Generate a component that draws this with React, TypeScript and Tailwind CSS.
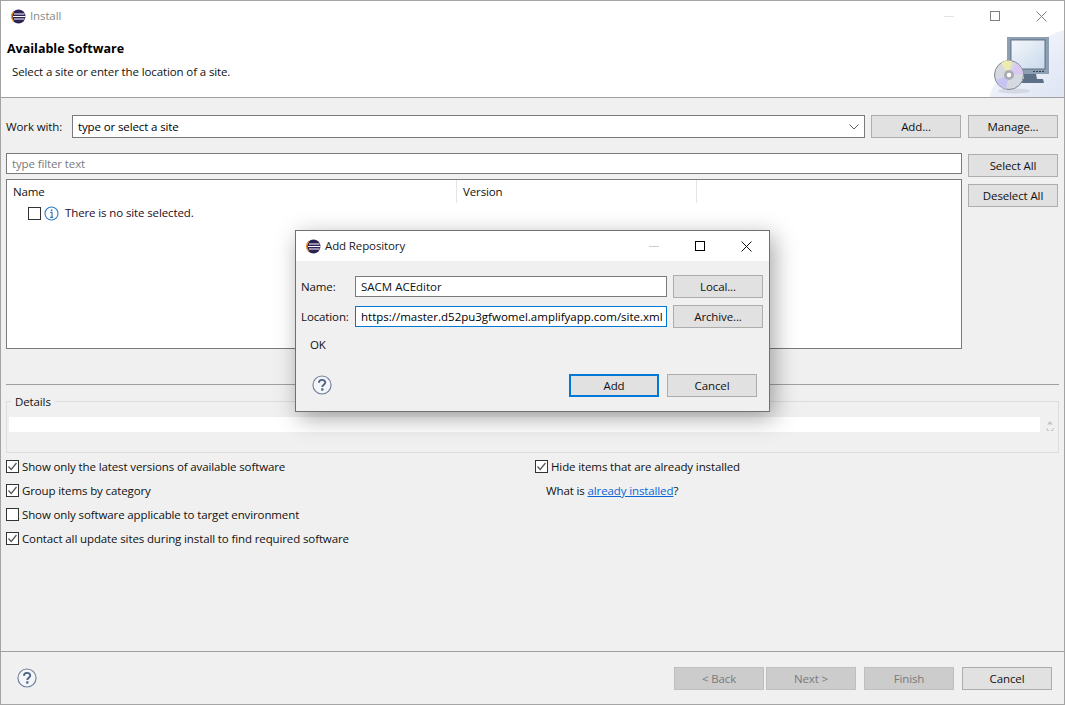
import React from "react";

function EclipseIcon() {
  return (
    <svg width="15" height="15" viewBox="0 0 15 15" className="shrink-0">
      <circle cx="7.5" cy="7.500" r="7" fill="#2c2255" />
      <path d="M2.500 2.800A7 7 0 0 0 .7 7.500a7 7 0 0 0 1.800 4.700" fill="none" stroke="#f7941e" strokeWidth="1.300" />
      <path d="M3 5h10.500M2 7.500h12.500M3 10h10.500" stroke="#ffffff" strokeWidth="1" />
    </svg>
  );
}

function HelpIcon() {
  return (
    <svg width="20" height="20" viewBox="0 0 21 21" className="shrink-0">
      <circle cx="10.500" cy="10.500" r="9.500" fill="#f4f5f8" stroke="#6f7f9e" strokeWidth="1.200" />
      <path d="M7.300 8.200c0-4 6.600-4 6.600-.3 0 2.400-3.100 2.300-3.100 4.600" fill="none" stroke="#4d6186" strokeWidth="2" />
      <rect x="9.600" y="14" width="2.400" height="2.400" fill="#4d6186" />
    </svg>
  );
}

function Check({ checked }: { checked?: boolean }) {
  return (
    <span className="w-[13px] h-[13px] border border-[#333333] bg-white flex shrink-0 items-center justify-center">
      {checked && (
        <svg width="11" height="11" viewBox="0 0 11 11">
          <path d="M1.500 5.500 4.200 8.500 9.500 2" fill="none" stroke="#555555" strokeWidth="1.200" />
        </svg>
      )}
    </span>
  );
}

function CheckRow({ label, checked }: { label: string; checked?: boolean }) {
  return (
    <div className="h-[24px] flex items-center gap-[3px]">
      <Check checked={checked} />
      <span className="pt-px">{label}</span>
    </div>
  );
}

function Btn({ label, className = "", focused }: { label: string; className?: string; focused?: boolean }) {
  const border = focused ? "border-2 border-[#0078d7]" : "border border-[#adadad]";
  return (
    <div className={"w-[90px] h-[23px] pt-px shrink-0 flex items-center justify-center bg-[#e1e1e1] text-[#111111] " + border + " " + className}>
      {label}
    </div>
  );
}

function DisabledBtn({ label }: { label: string }) {
  return (
    <div className="w-[90px] h-[23px] pt-px shrink-0 flex items-center justify-center border border-[#bfbfbf] bg-[#cccccc] text-[#7a7a7a]">
      {label}
    </div>
  );
}

function MonitorArt() {
  return (
    <svg width="78" height="68" viewBox="0 0 78 68" className="shrink-0">
      <defs>
        <linearGradient id="bgw" x1="0" y1="0" x2="1" y2="1">
          <stop offset="0" stopColor="#ffffff" />
          <stop offset="0.7" stopColor="#e6ebf7" />
          <stop offset="1" stopColor="#dfe5f4" />
        </linearGradient>
        <linearGradient id="scr" x1="0" y1="0" x2="1" y2="1">
          <stop offset="0" stopColor="#f4f7fb" />
          <stop offset="1" stopColor="#c9d9ec" />
        </linearGradient>
      </defs>
      <path d="M3 68C12 40 44 12 78 1V68Z" fill="url(#bgw)" />
      <rect x="21" y="8" width="42" height="37" fill="#8c9fb3" />
      <rect x="25" y="11" width="34" height="29" fill="url(#scr)" stroke="#4d5c6e" strokeWidth="0.800" />
      <path d="M47 42h2v1h-2zM50 42h2v1h-2zM53 42h2v1h-2zM56 42h2v1h-2z" fill="#33404e" />
      <path d="M38 45h12l1 5h6l1 4H32l1-4h5Z" fill="#5d7085" />
      <ellipse cx="28" cy="62" rx="16" ry="2.500" fill="#c6cbd6" opacity="0.600" />
      <circle cx="23" cy="46" r="14.500" fill="#d6dae0" stroke="#7f8a94" />
      <path d="M23 46 15 34A14 14 0 0 1 26 32Z" fill="#ecebb0" />
      <path d="M23 46 30 34A14 14 0 0 1 37 45Z" fill="#d9c8f3" />
      <path d="M23 46 10 51A14 14 0 0 0 20 60Z" fill="#c8c4f0" />
      <circle cx="23" cy="46" r="5" fill="#a9aeb3" />
      <circle cx="23" cy="46" r="2.200" fill="#ffffff" />
    </svg>
  );
}

export default function App() {
  return (
    <div className="relative w-[1065px] h-[706px] bg-white text-[11.5px] tracking-[-0.12px] text-[#111111] overflow-hidden font-['Open_Sans','Noto_Sans',sans-serif]">
      <div className="h-[705px] border border-[#a3a3a3] flex flex-col">
        {/* Header */}
        <div className="h-[96px] bg-white relative flex flex-col shrink-0">
          <div className="h-[30px] flex items-center pl-[10px] gap-[4px]">
            <EclipseIcon />
            <span className="text-[#8a8a8a]">Install</span>
            <div className="ml-auto flex items-center h-full">
              <span className="w-[46px] flex justify-center"><span className="w-[10px] h-px bg-[#e2e2e2]" /></span>
              <span className="w-[46px] flex justify-center"><span className="w-[10px] h-[10px] border border-[#808080]" /></span>
              <span className="w-[46px] flex justify-center">
                <svg width="11" height="11" viewBox="0 0 11 11"><path d="M.5.5l10 10M10.500.5l-10 10" stroke="#808080" fill="none" /></svg>
              </span>
            </div>
          </div>
          <div className="pl-[6px] pt-[9px] font-bold leading-[18px] text-[12.5px] tracking-normal text-black">Available Software</div>
          <div className="pl-[11px] pt-[5px] leading-[18px]">Select a site or enter the location of a site.</div>
          <div className="absolute right-0 bottom-0 flex"><MonitorArt /></div>
        </div>

        {/* Body */}
        <div className="flex-1 bg-[#f0f0f0] border-t border-[#a0a0a0] flex flex-col px-[5px] pt-[17px]">
          <div className="flex items-center h-[23px]">
            <span className="w-[66px] pt-px">Work with:</span>
            <div className="w-[793px] h-[23px] border border-[#7a7a7a] bg-white flex items-center pl-[5px] pr-[5px]">
              <span className="text-black pt-px">type or select a site</span>
              <svg className="ml-auto" width="10" height="6" viewBox="0 0 10 6"><path d="M.5.5 5 5 9.500.5" fill="none" stroke="#606060" /></svg>
            </div>
            <Btn label="Add..." className="ml-[6px]" />
            <Btn label="Manage..." className="ml-[7px]" />
          </div>

          <div className="flex mt-[15px] gap-[6px]">
            <div className="w-[956px] flex flex-col gap-[5px]">
              <div className="h-[21px] border border-[#7a7a7a] bg-white flex items-center pl-[5px] text-[#7a7a7a]">type filter text</div>
              <div className="h-[170px] border border-[#7a7a7a] bg-white flex flex-col">
                <div className="h-[23px] flex shrink-0">
                  <div className="w-[450px] pl-[6px] flex items-center border-r border-[#e5e5e5]">Name</div>
                  <div className="w-[240px] pl-[6px] flex items-center border-r border-[#e5e5e5]">Version</div>
                </div>
                <div className="h-[20px] flex items-center pl-[21px]">
                  <Check />
                  <svg width="15" height="15" viewBox="0 0 15 15" className="ml-[3px] shrink-0">
                    <circle cx="7.500" cy="7.500" r="6.500" fill="#fff" stroke="#2f7cc0" strokeWidth="1.100" />
                    <path d="M6.200 6.300h1.800v5M6 11.300h3.200" fill="none" stroke="#2f7cc0" strokeWidth="1.200" />
                    <rect x="6.800" y="3.400" width="1.600" height="1.600" fill="#2f7cc0" />
                  </svg>
                  <span className="ml-[6px] text-[#2a0a24]">There is no site selected.</span>
                </div>
              </div>
            </div>
            <div className="flex flex-col gap-[7px] pt-px">
              <Btn label="Select All" />
              <Btn label="Deselect All" />
            </div>
          </div>

          <div className="mt-[35px] h-px w-[1053px] bg-[#a0a0a0]" />

          <div className="relative mt-[10px] w-[1053px] h-[58px] pt-[6px]">
            <div className="h-[52px] border border-[#dcdcdc] pt-[15px] px-[2px] flex">
              <div className="w-[1031px] h-[15px] bg-white" />
              <svg className="ml-[5px] mt-[3px]" width="10" height="12" viewBox="0 0 10 12">
                <path d="M5 1 8 4.500H2Z" fill="#c4c4c4" />
                <path d="M2 8v2.500h2M8 8v2.500H6" fill="none" stroke="#c4c4c4" />
              </svg>
            </div>
            <span className="absolute left-[5px] top-0 px-[4px] bg-[#f0f0f0] leading-[14px]">Details</span>
          </div>

          <div className="flex mt-px">
            <div className="w-[529px]">
              <CheckRow checked label="Show only the latest versions of available software" />
              <CheckRow checked label="Group items by category" />
              <CheckRow label="Show only software applicable to target environment" />
              <CheckRow checked label="Contact all update sites during install to find required software" />
            </div>
            <div>
              <CheckRow checked label="Hide items that are already installed" />
              <div className="h-[24px] flex items-center pl-[11px] pt-px">
                <span>What is&nbsp;<span className="text-[#0a66d8] underline">already installed</span>?</span>
              </div>
            </div>
          </div>
        </div>

        {/* Footer */}
        <div className="h-[53px] shrink-0 bg-[#f0f0f0] border-t border-[#a0a0a0] flex items-center pl-[16px] pr-[12px]">
          <HelpIcon />
          <div className="ml-auto flex">
            <DisabledBtn label="< Back" />
            <div className="w-[2px]" />
            <DisabledBtn label="Next >" />
            <div className="w-[8px]" />
            <DisabledBtn label="Finish" />
            <div className="w-[8px]" />
            <Btn label="Cancel" />
          </div>
        </div>
      </div>

      {/* Dialog */}
      <div className="absolute left-[295px] top-[230px] w-[475px] h-[182px] border border-[#707070] bg-[#f0f0f0] flex flex-col shadow-[4px_6px_22px_rgba(0,0,0,0.35)]">
        <div className="h-[30px] bg-white flex items-center pl-[10px] gap-[4px] shrink-0">
          <EclipseIcon />
          <span className="text-[#222222] pb-px">Add Repository</span>
          <div className="ml-auto flex items-center h-full">
            <span className="w-[46px] flex justify-center"><span className="w-[10px] h-px bg-[#cccccc]" /></span>
            <span className="w-[46px] flex justify-center"><span className="w-[10px] h-[10px] border border-black" /></span>
            <span className="w-[46px] flex justify-center">
              <svg width="11" height="11" viewBox="0 0 11 11"><path d="M.5.5l10 10M10.500.5l-10 10" stroke="#111111" fill="none" /></svg>
            </span>
          </div>
        </div>
        <div className="pl-[5px] pt-[14px] flex-1 flex flex-col">
          <div className="flex items-center h-[23px]">
            <span className="w-[54px]">Name:</span>
            <div className="w-[312px] h-[21px] border border-[#7a7a7a] bg-white flex items-center pl-[5px] tracking-normal">SACM ACEditor</div>
            <Btn label="Local..." className="ml-[6px]" />
          </div>
          <div className="flex items-center h-[23px] mt-[7px]">
            <span className="w-[54px]">Location:</span>
            <div className="w-[312px] h-[21px] border border-[#0078d7] bg-white flex items-center pl-[5px] text-black whitespace-nowrap tracking-normal">https://master.d52pu3gfwomel.amplifyapp.com/site.xml</div>
            <Btn label="Archive..." className="ml-[6px]" />
          </div>
          <div className="pl-[9px] mt-[8px] leading-[18px]">OK</div>
          <div className="flex items-center mt-[20px] pl-[11px]">
            <span className="mb-[2px] flex"><HelpIcon /></span>
            <Btn label="Add" focused className="ml-[237px]" />
            <Btn label="Cancel" className="ml-[8px]" />
          </div>
        </div>
      </div>
    </div>
  );
}
